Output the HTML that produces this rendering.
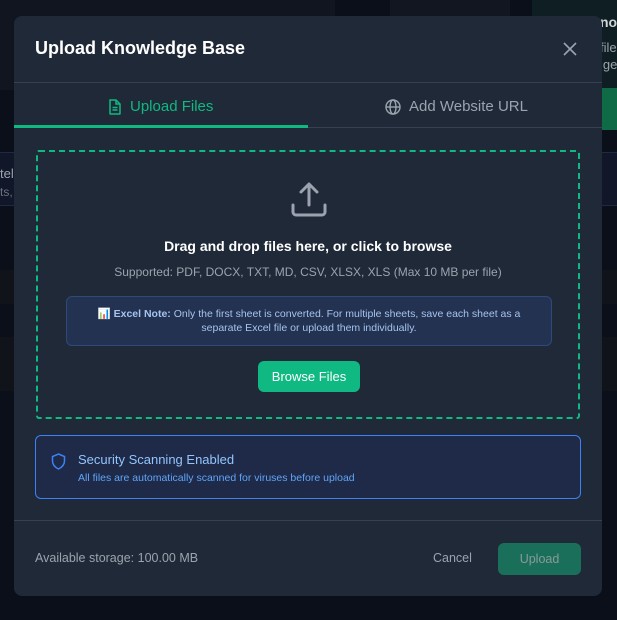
<!DOCTYPE html>
<html><head><meta charset="utf-8"><style>
*{box-sizing:border-box;margin:0;padding:0}
body{width:617px;height:620px;background:#0b0f1a;font-family:"Liberation Sans",sans-serif;position:relative;overflow:hidden}
.bg{position:absolute}
.modal{position:absolute;left:14px;top:16px;width:588px;height:580px;background:#1f2937;border-radius:8px}
.title{position:absolute;left:21px;top:22px;color:#fff;font-size:18px;font-weight:bold}
.close{position:absolute;left:549px;top:26px}
.hr{position:absolute;left:0;right:0;height:1px;background:#374151}
.tab{position:absolute;top:82px;font-size:15px;display:flex;align-items:center;gap:8px}
.drop{position:absolute;left:22px;top:134px;width:544px;height:269px;border:2px dashed #10b981;border-radius:3px}
.c{position:absolute;left:0;right:0;text-align:center}
.note{position:absolute;left:28px;top:144px;width:486px;height:50px;background:#233250;border:1px solid #2e4a7a;border-radius:6px;color:#a5c4f0;font-size:10.5px;text-align:center;padding-top:10px;line-height:14px}
.browse{position:absolute;left:220px;top:209px;width:102px;height:31px;background:#10b981;border-radius:6px;color:#fff;font-size:13px;text-align:center;line-height:31px}
.sec{position:absolute;left:21px;top:419px;width:546px;height:64px;background:#1e2a47;border:1px solid #3b82f6;border-radius:6px}
</style></head><body>
<div class="bg" style="left:0;top:0;width:335px;height:90px;background:#111520"></div>
<div class="bg" style="left:390px;top:0;width:120px;height:20px;background:#121621"></div>
<div class="bg" style="left:532px;top:0;width:85px;height:127px;background:#0f1e22"></div>
<div class="bg" style="left:532px;top:88px;width:85px;height:42px;background:#0e6b45"></div>
<div class="bg" style="left:0;top:152px;width:617px;height:54px;background:#111728;border-top:1px solid #1f2a44;border-bottom:1px solid #1f2a44"></div>
<div class="bg" style="left:0;top:270px;width:617px;height:34px;background:#10131a"></div>
<div class="bg" style="left:0;top:337px;width:617px;height:54px;background:#10131a"></div>
<div class="bg" style="left:0;top:166px;color:#9ca3af;font-size:13px">tel</div>
<div class="bg" style="left:0;top:185px;color:#6b7280;font-size:12px">ts,</div>
<div class="bg" style="left:600px;top:14px;color:#d1d5db;font-size:14px;font-weight:bold">nov</div>
<div class="bg" style="left:600px;top:40px;color:#9ca3af;font-size:13px">file</div>
<div class="bg" style="left:600px;top:57px;color:#9ca3af;font-size:13px">lge</div>
<div class="modal">
<div class="title">Upload Knowledge Base</div>
<svg class="close" width="14" height="14" viewBox="0 0 14 14"><path d="M1 1L13 13M13 1L1 13" stroke="#9ca3af" stroke-width="1.6"/></svg>
<div class="hr" style="top:66px"></div>
<div class="hr" style="top:111px"></div>
<div style="position:absolute;left:0;top:109px;width:294px;height:3px;background:#10b981"></div>
<div class="tab" style="left:94px;color:#10b981">
<svg width="14" height="16" viewBox="0 0 14 16" fill="none" stroke="#10b981" stroke-width="1.5"><path d="M2 1h6l4 4v9.5a.5.5 0 0 1-.5.5h-9a.5.5 0 0 1-.5-.5V1.5Z"/><path d="M8 1v4h4M4.5 8.5h5M4.5 11h5"/></svg>Upload Files</div>
<div class="tab" style="left:371px;color:#9ca3af">
<svg width="16" height="16" viewBox="0 0 16 16" fill="none" stroke="#9ca3af" stroke-width="1.4"><circle cx="8" cy="8" r="7"/><ellipse cx="8" cy="8" rx="3" ry="7"/><path d="M1 8h14"/></svg>Add Website URL</div>
<div class="drop">
<svg style="position:absolute;left:253px;top:30px" width="36" height="36" viewBox="0 0 36 36" fill="none" stroke="#9ca3af" stroke-width="3" stroke-linecap="round" stroke-linejoin="round"><path d="M18 23V3M10 10l8-8 8 8M2 23v7a3 3 0 0 0 3 3h26a3 3 0 0 0 3-3v-7"/></svg>
<div class="c" style="top:86px;color:#fff;font-size:14px;font-weight:bold">Drag and drop files here, or click to browse</div>
<div class="c" style="top:113px;color:#9ca3af;font-size:12px">Supported: PDF, DOCX, TXT, MD, CSV, XLSX, XLS (Max 10 MB per file)</div>
<div class="note">📊 <b>Excel Note:</b> Only the first sheet is converted. For multiple sheets, save each sheet as a<br>separate Excel file or upload them individually.</div>
<div class="browse">Browse Files</div>
</div>
<div class="sec">
<svg style="position:absolute;left:15px;top:17px" width="15" height="17" viewBox="0 0 15 17" fill="none" stroke="#3b82f6" stroke-width="1.5"><path d="M7.5 1L13.5 3.5V8c0 4-3 6.5-6 8-3-1.5-6-4-6-8V3.5Z"/></svg>
<div style="position:absolute;left:42px;top:16px;color:#93c5fd;font-size:13px">Security Scanning Enabled</div>
<div style="position:absolute;left:42px;top:36px;color:#60a5fa;font-size:10.5px">All files are automatically scanned for viruses before upload</div>
</div>
<div class="hr" style="top:504px"></div>
<div style="position:absolute;left:21px;top:535px;color:#9ca3af;font-size:12.5px">Available storage: 100.00 MB</div>
<div style="position:absolute;left:419px;top:535px;color:#9ca3af;font-size:12.5px">Cancel</div>
<div style="position:absolute;left:484px;top:527px;width:83px;height:32px;background:#1a6f5a;border-radius:6px;color:#8a9a99;font-size:12.5px;text-align:center;line-height:32px">Upload</div>
</div>
</body></html>
